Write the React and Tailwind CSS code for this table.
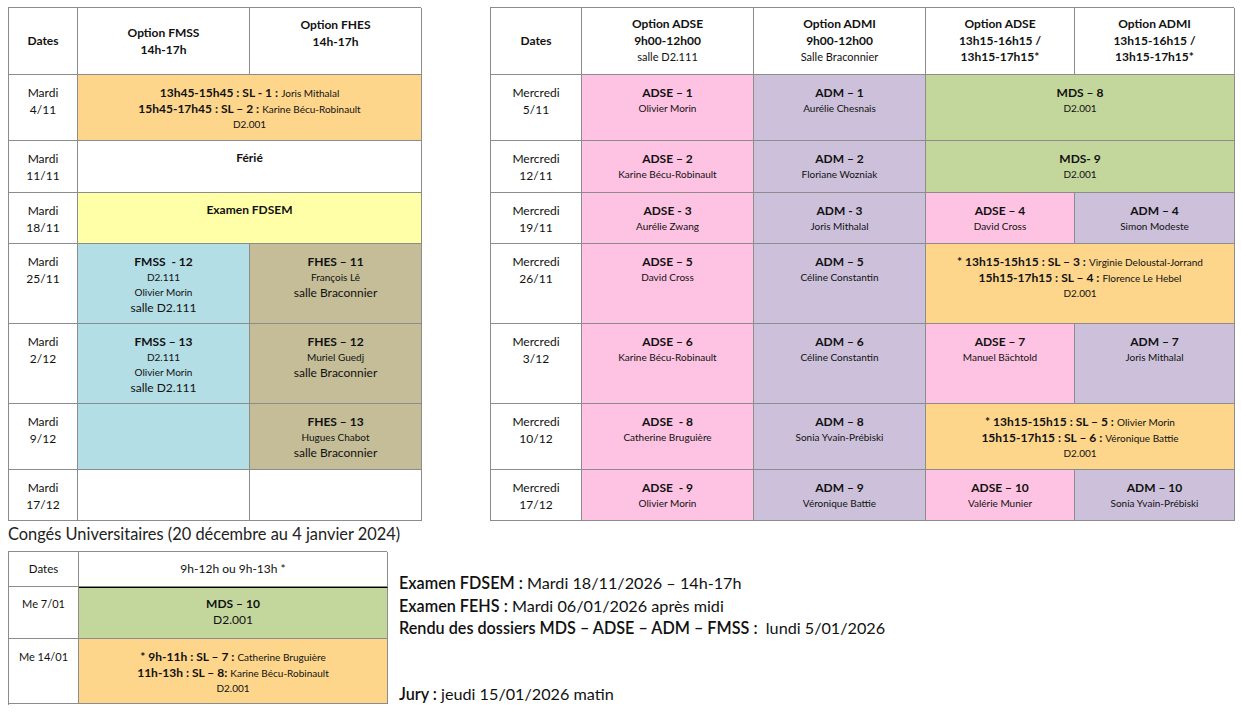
import React from 'react';

const Cell = ({ className = '', children }) => (
  <div className={`border-r border-b border-[#8c8c8c] flex flex-col items-center text-center ${className}`}>
    {children}
  </div>
);

const Title = ({ children }) => <p className="text-[12px] font-bold leading-[16px] whitespace-pre">{children}</p>;
const Small = ({ children }) => <p className="text-[10px] leading-[15px]">{children}</p>;
const Medium = ({ children }) => <p className="text-[12px] leading-[16px]">{children}</p>;

const Slot = ({ bold, name }) => (
  <p className="text-[12px] leading-[16px] whitespace-nowrap">
    <span className="font-bold">{bold}</span>{' '}
    <span className="text-[10px]">{name}</span>
  </p>
);

const DateCell = ({ day, date }) => (
  <Cell className="pt-[9px] text-[12px] leading-[17px]">
    <p>{day}</p>
    <p>{date}</p>
  </Cell>
);

const Session = ({ bg, title, lines = [], className = '' }) => (
  <Cell className={`pt-[10px] ${bg} ${className}`}>
    <Title>{title}</Title>
    {lines.map((l, i) =>
      l.big ? <Medium key={i}>{l.text}</Medium> : <Small key={i}>{l.text}</Small>
    )}
  </Cell>
);

function LeftTable() {
  return (
    <div className="grid grid-cols-[69px_172px_172px] grid-rows-[67px_66px_52px_51px_80px_80px_66px_51px] w-[413px] border-t border-l border-[#8c8c8c]">
      <Cell className="justify-center text-[12px] font-bold">Dates</Cell>
      <Cell className="justify-center text-[12px] font-bold leading-[17px]">
        <p>Option FMSS</p>
        <p>14h-17h</p>
      </Cell>
      <Cell className="pt-[8px] text-[12px] font-bold leading-[17px]">
        <p>Option FHES</p>
        <p>14h-17h</p>
      </Cell>

      <DateCell day="Mardi" date="4/11" />
      <Cell className="col-span-2 pt-[10px] bg-[#fdd68b]">
        <Slot bold="13h45-15h45 : SL - 1 :" name="Joris Mithalal" />
        <Slot bold="15h45-17h45 : SL – 2 :" name="Karine Bécu-Robinault" />
        <Small>D2.001</Small>
      </Cell>

      <DateCell day="Mardi" date="11/11" />
      <Cell className="col-span-2 pt-[9px]">
        <Title>Férié</Title>
      </Cell>

      <DateCell day="Mardi" date="18/11" />
      <Cell className="col-span-2 pt-[9px] bg-[#ffffa8]">
        <Title>Examen FDSEM</Title>
      </Cell>

      <DateCell day="Mardi" date="25/11" />
      <Session
        bg="bg-[#b4dee6]"
        title="FMSS  - 12"
        lines={[{ text: 'D2.111' }, { text: 'Olivier Morin' }, { text: 'salle D2.111', big: true }]}
      />
      <Session
        bg="bg-[#c4bd97]"
        title="FHES – 11"
        lines={[{ text: 'François Lê' }, { text: 'salle Braconnier', big: true }]}
      />

      <DateCell day="Mardi" date="2/12" />
      <Session
        bg="bg-[#b4dee6]"
        title="FMSS – 13"
        lines={[{ text: 'D2.111' }, { text: 'Olivier Morin' }, { text: 'salle D2.111', big: true }]}
      />
      <Session
        bg="bg-[#c4bd97]"
        title="FHES – 12"
        lines={[{ text: 'Muriel Guedj' }, { text: 'salle Braconnier', big: true }]}
      />

      <DateCell day="Mardi" date="9/12" />
      <Cell className="bg-[#b4dee6]" />
      <Session
        bg="bg-[#c4bd97]"
        title="FHES – 13"
        lines={[{ text: 'Hugues Chabot' }, { text: 'salle Braconnier', big: true }]}
      />

      <DateCell day="Mardi" date="17/12" />
      <Cell />
      <Cell />
    </div>
  );
}

function RightTable() {
  const pink = 'bg-[#fec2e2]';
  const lav = 'bg-[#ccc0da]';
  const green = 'bg-[#c3d69c]';
  const orange = 'bg-[#fdd68b]';
  return (
    <div className="grid grid-cols-[91px_172px_172px_149px_160px] grid-rows-[67px_66px_52px_51px_80px_80px_66px_51px] w-[744px] border-t border-l border-[#8c8c8c]">
      <Cell className="justify-center text-[12px] font-bold">Dates</Cell>
      <Cell className="pt-[8px] leading-[16.5px]">
        <p className="text-[12px] font-bold">Option ADSE</p>
        <p className="text-[12px] font-bold">9h00-12h00</p>
        <p className="text-[11px]">salle D2.111</p>
      </Cell>
      <Cell className="pt-[8px] leading-[16.5px]">
        <p className="text-[12px] font-bold">Option ADMI</p>
        <p className="text-[12px] font-bold">9h00-12h00</p>
        <p className="text-[11px]">Salle Braconnier</p>
      </Cell>
      <Cell className="pt-[8px] text-[12px] font-bold leading-[16.5px]">
        <p>Option ADSE</p>
        <p>13h15-16h15 /</p>
        <p>13h15-17h15*</p>
      </Cell>
      <Cell className="pt-[8px] text-[12px] font-bold leading-[16.5px]">
        <p>Option ADMI</p>
        <p>13h15-16h15 /</p>
        <p>13h15-17h15*</p>
      </Cell>

      <DateCell day="Mercredi" date="5/11" />
      <Session bg={pink} title="ADSE – 1" lines={[{ text: 'Olivier Morin' }]} />
      <Session bg={lav} title="ADM – 1" lines={[{ text: 'Aurélie Chesnais' }]} />
      <Session bg={green} className="col-span-2" title="MDS – 8" lines={[{ text: 'D2.001' }]} />

      <DateCell day="Mercredi" date="12/11" />
      <Session bg={pink} title="ADSE – 2" lines={[{ text: 'Karine Bécu-Robinault' }]} />
      <Session bg={lav} title="ADM – 2" lines={[{ text: 'Floriane Wozniak' }]} />
      <Session bg={green} className="col-span-2" title="MDS- 9" lines={[{ text: 'D2.001' }]} />

      <DateCell day="Mercredi" date="19/11" />
      <Session bg={pink} title="ADSE - 3" lines={[{ text: 'Aurélie Zwang' }]} />
      <Session bg={lav} title="ADM - 3" lines={[{ text: 'Joris Mithalal' }]} />
      <Session bg={pink} title="ADSE – 4" lines={[{ text: 'David Cross' }]} />
      <Session bg={lav} title="ADM – 4" lines={[{ text: 'Simon Modeste' }]} />

      <DateCell day="Mercredi" date="26/11" />
      <Session bg={pink} title="ADSE – 5" lines={[{ text: 'David Cross' }]} />
      <Session bg={lav} title="ADM – 5" lines={[{ text: 'Céline Constantin' }]} />
      <Cell className={`col-span-2 pt-[10px] ${orange}`}>
        <Slot bold="* 13h15-15h15 : SL – 3 :" name="Virginie Deloustal-Jorrand" />
        <Slot bold="15h15-17h15 : SL – 4 :" name="Florence Le Hebel" />
        <Small>D2.001</Small>
      </Cell>

      <DateCell day="Mercredi" date="3/12" />
      <Session bg={pink} title="ADSE – 6" lines={[{ text: 'Karine Bécu-Robinault' }]} />
      <Session bg={lav} title="ADM – 6" lines={[{ text: 'Céline Constantin' }]} />
      <Session bg={pink} title="ADSE – 7" lines={[{ text: 'Manuel Bächtold' }]} />
      <Session bg={lav} title="ADM – 7" lines={[{ text: 'Joris Mithalal' }]} />

      <DateCell day="Mercredi" date="10/12" />
      <Session bg={pink} title="ADSE  - 8" lines={[{ text: 'Catherine Bruguière' }]} />
      <Session bg={lav} title="ADM – 8" lines={[{ text: 'Sonia Yvain-Prébiski' }]} />
      <Cell className={`col-span-2 pt-[10px] ${orange}`}>
        <Slot bold="* 13h15-15h15 : SL – 5 :" name="Olivier Morin" />
        <Slot bold="15h15-17h15 : SL – 6 :" name="Véronique Battie" />
        <Small>D2.001</Small>
      </Cell>

      <DateCell day="Mercredi" date="17/12" />
      <Session bg={pink} title="ADSE  - 9" lines={[{ text: 'Olivier Morin' }]} />
      <Session bg={lav} title="ADM – 9" lines={[{ text: 'Véronique Battie' }]} />
      <Session bg={pink} title="ADSE – 10" lines={[{ text: 'Valérie Munier' }]} />
      <Session bg={lav} title="ADM – 10" lines={[{ text: 'Sonia Yvain-Prébiski' }]} />
    </div>
  );
}

function JanuaryTable() {
  return (
    <div className="grid grid-cols-[70px_309px] grid-rows-[35px_52px_65px] w-[379px] border-t border-l border-[#8c8c8c]">
      <Cell className="justify-center text-[11.5px]">Dates</Cell>
      <Cell className="justify-center text-[12px]">9h-12h ou 9h-13h *</Cell>

      <Cell className="pt-[9px] text-[11px] leading-[16px]">Me 7/01</Cell>
      <Cell className="pt-[8px] bg-[#c3d69c] border-t border-t-black">
        <Title>MDS – 10</Title>
        <Medium>D2.001</Medium>
      </Cell>

      <Cell className="pt-[10px] text-[11px] leading-[16px]">Me 14/01</Cell>
      <Cell className="pt-[10px] bg-[#fdd68b]">
        <Slot bold="* 9h-11h : SL – 7 :" name="Catherine Bruguière" />
        <Slot bold="11h-13h : SL – 8:" name="Karine Bécu-Robinault" />
        <Small>D2.001</Small>
      </Cell>
    </div>
  );
}

export default function App() {
  return (
    <div className="w-[1241px] h-[713px] bg-white text-[#111] font-['Lato','Noto_Sans',sans-serif] pl-[8px] pt-[7px] overflow-hidden">
      <div className="flex gap-[69px]">
        <LeftTable />
        <RightTable />
      </div>

      <p className="mt-[2px] text-[16.4px] leading-[21px] text-[#222]">
        Congés Universitaires (20 décembre au 4 janvier 2024)
      </p>

      <div className="flex mt-[7px]">
        <JanuaryTable />
        <div className="ml-[12px] pt-[21px] text-[16.2px] leading-[22.5px] whitespace-pre">
          <p>
            <span className="font-semibold">Examen FDSEM :</span> Mardi 18/11/2026 – 14h-17h
          </p>
          <p>
            <span className="font-semibold">Examen FEHS :</span> Mardi 06/01/2026 après midi
          </p>
          <p>
            <span className="font-semibold">Rendu des dossiers MDS – ADSE – ADM – FMSS :</span>  lundi 5/01/2026
          </p>
          <p className="mt-[43px]">
            <span className="font-semibold">Jury :</span> jeudi 15/01/2026 matin
          </p>
        </div>
      </div>
    </div>
  );
}
